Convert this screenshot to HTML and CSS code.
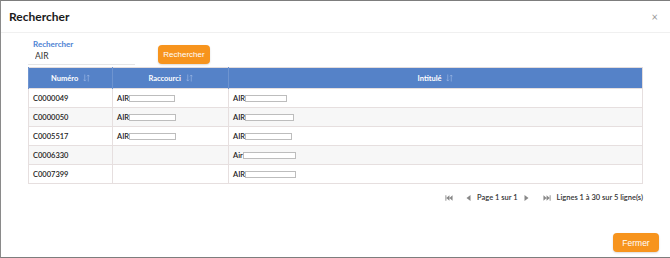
FILE: index.html
```html
<!DOCTYPE html>
<html lang="fr">
<head>
    <meta charset="UTF-8">
    <meta name="viewport" content="width=device-width, initial-scale=1.0">
    <title>Rechercher</title>
    <link rel="stylesheet" href="styles.css">
</head>
<body>
    <div class="modal">
        <div class="modal-header">
            <h2>Rechercher</h2>
            <span class="close">&times;</span>
        </div>

        <div class="modal-body">
            <div class="search-row">
                <div class="field">
                    <label for="recherche">Rechercher</label>
                    <input type="text" id="recherche" value="AIR">
                </div>
                <button class="btn">Rechercher</button>
            </div>

            <table class="grid">
                <thead>
                    <tr>
                        <th class="col-num">Numéro <svg class="sort" viewBox="0 0 8 9"><path d="M2 0.5v7.5M0.6 6.4L2 8l1.4-1.6M6 8.5V1M4.6 2.6L6 1l1.4 1.6"/></svg></th>
                        <th class="col-rac">Raccourci <svg class="sort" viewBox="0 0 8 9"><path d="M2 0.5v7.5M0.6 6.4L2 8l1.4-1.6M6 8.5V1M4.6 2.6L6 1l1.4 1.6"/></svg></th>
                        <th>Intitulé <svg class="sort" viewBox="0 0 8 9"><path d="M2 0.5v7.5M0.6 6.4L2 8l1.4-1.6M6 8.5V1M4.6 2.6L6 1l1.4 1.6"/></svg></th>
                    </tr>
                </thead>
                <tbody>
                    <tr>
                        <td>C0000049</td>
                        <td>AIR<span class="mask" style="width:44px"></span></td>
                        <td>AIR<span class="mask" style="width:40px"></span></td>
                    </tr>
                    <tr>
                        <td>C0000050</td>
                        <td>AIR<span class="mask" style="width:45px"></span></td>
                        <td>AIR<span class="mask" style="width:47px"></span></td>
                    </tr>
                    <tr>
                        <td>C0005517</td>
                        <td>AIR<span class="mask" style="width:45px"></span></td>
                        <td>AIR<span class="mask" style="width:45px"></span></td>
                    </tr>
                    <tr>
                        <td>C0006330</td>
                        <td></td>
                        <td>Air<span class="mask" style="width:51px"></span></td>
                    </tr>
                    <tr>
                        <td>C0007399</td>
                        <td></td>
                        <td>AIR<span class="mask" style="width:49px"></span></td>
                    </tr>
                </tbody>
            </table>

            <div class="pager">
                <svg class="pg first" viewBox="0 0 9 6"><path d="M0.5 0v6h1V0zM1.5 3L5 0v6zM5 3L8.5 0v6z"/></svg>
                <svg class="pg prev" viewBox="0 0 5 6"><path d="M0.5 3L4.5 0v6z"/></svg>
                <span class="pg-text">Page 1 sur 1</span>
                <svg class="pg next" viewBox="0 0 5 6"><path d="M4.5 3L0.5 0v6z"/></svg>
                <svg class="pg last" viewBox="0 0 9 6"><path d="M8.5 0v6h-1V0zM7.5 3L4 0v6zM4 3L0.5 0v6z"/></svg>
                <span class="pg-info">Lignes 1 à 30 sur 5 ligne(s)</span>
            </div>
        </div>

        <div class="modal-footer">
            <button class="btn btn-close">Fermer</button>
        </div>
    </div>
</body>
</html>
```

FILE: styles.css
```css
body {
    font-family: Lato, "Noto Sans", sans-serif;
    margin: 0;
    padding: 0;
    background-color: #fff;
}

.modal {
    width: 670px;
    height: 258px;
    box-sizing: border-box;
    border-top: 1px solid #7d7d7d;
    border-left: 1px solid #8a8a8a;
    border-bottom: 1px solid #7d7d7d;
    display: flex;
    flex-direction: column;
}

.modal-header {
    height: 31px;
    padding: 0 12px 0 8px;
    border-bottom: 1px solid #f0f0f0;
    display: flex;
    align-items: center;
    justify-content: space-between;
}

.modal-header h2 {
    margin: 0;
    font-size: 12px;
    font-weight: 700;
    color: #1a1a1a;
}

.close {
    color: #999;
    font-size: 11px;
    line-height: 1;
}

.modal-body {
    padding: 6px 26px 0 27px;
}

.search-row {
    display: flex;
    align-items: flex-start;
}

.field {
    width: 107px;
    border-bottom: 1px solid #e6e6e6;
    padding-bottom: 2px;
}

label {
    display: block;
    padding-left: 5px;
    font-size: 8px;
    font-weight: 700;
    color: #4d82d3;
    line-height: 10px;
}

input {
    display: block;
    width: 100%;
    box-sizing: border-box;
    border: none;
    padding: 2px 0 0 7px;
    font-family: Lato, "Noto Sans", sans-serif;
    font-size: 8.5px;
    color: #333;
    line-height: 11px;
    outline: none;
}

.btn {
    background-color: #f7941d;
    color: #fff;
    border: none;
    border-radius: 4px;
    font-family: "Liberation Sans", Arial, sans-serif;
    font-size: 8px;
    cursor: pointer;
    box-shadow: 0 1px 2px rgba(0, 0, 0, 0.15);
}

.search-row .btn {
    margin: 6px 0 0 23px;
    width: 52px;
    height: 19px;
    padding: 0;
}

.grid {
    margin-top: 2px;
    width: 615px;
    table-layout: fixed;
    border-collapse: collapse;
    font-size: 7.5px;
    color: #222;
    border: 1px solid #e3dcdc;
}

.grid th {
    background-color: #5582c8;
    color: #fff;
    font-weight: 700;
    height: 20px;
    padding: 0;
    border-left: 1px solid #6e94d0;
}

.col-num {
    width: 83px;
}

.col-rac {
    width: 115px;
}

.sort {
    width: 7px;
    height: 8px;
    margin-left: 3px;
    vertical-align: -1px;
    fill: none;
    stroke: #9ab6e4;
    stroke-width: 0.8;
}

.grid td {
    height: 18px;
    padding: 0 0 0 4px;
    border: 1px solid #e6dfdf;
    font-weight: 600;
}

.grid tbody tr:nth-child(even) td {
    background-color: #f7f7f7;
}

.mask {
    display: inline-block;
    height: 5px;
    vertical-align: -1px;
    background-color: #fff;
    border: 1.5px solid #bdbdbd;
}

.pager {
    width: 615px;
    height: 27px;
    display: flex;
    align-items: center;
    justify-content: flex-end;
    font-size: 7.5px;
    color: #333;
    font-weight: 600;
}

.pg {
    height: 6px;
    fill: #888;
}

.first,
.last {
    width: 8px;
}

.prev,
.next {
    width: 5px;
}

.first {
    margin-right: 13px;
}

.prev {
    margin-right: 6px;
}

.next {
    margin-left: 6px;
    margin-right: 14px;
}

.last {
    margin-right: 6px;
}

.modal-footer {
    margin-top: auto;
    padding: 0 11px 5px 0;
    display: flex;
    justify-content: flex-end;
}

.btn-close {
    width: 46px;
    height: 19px;
    font-size: 8.5px;
}
```
